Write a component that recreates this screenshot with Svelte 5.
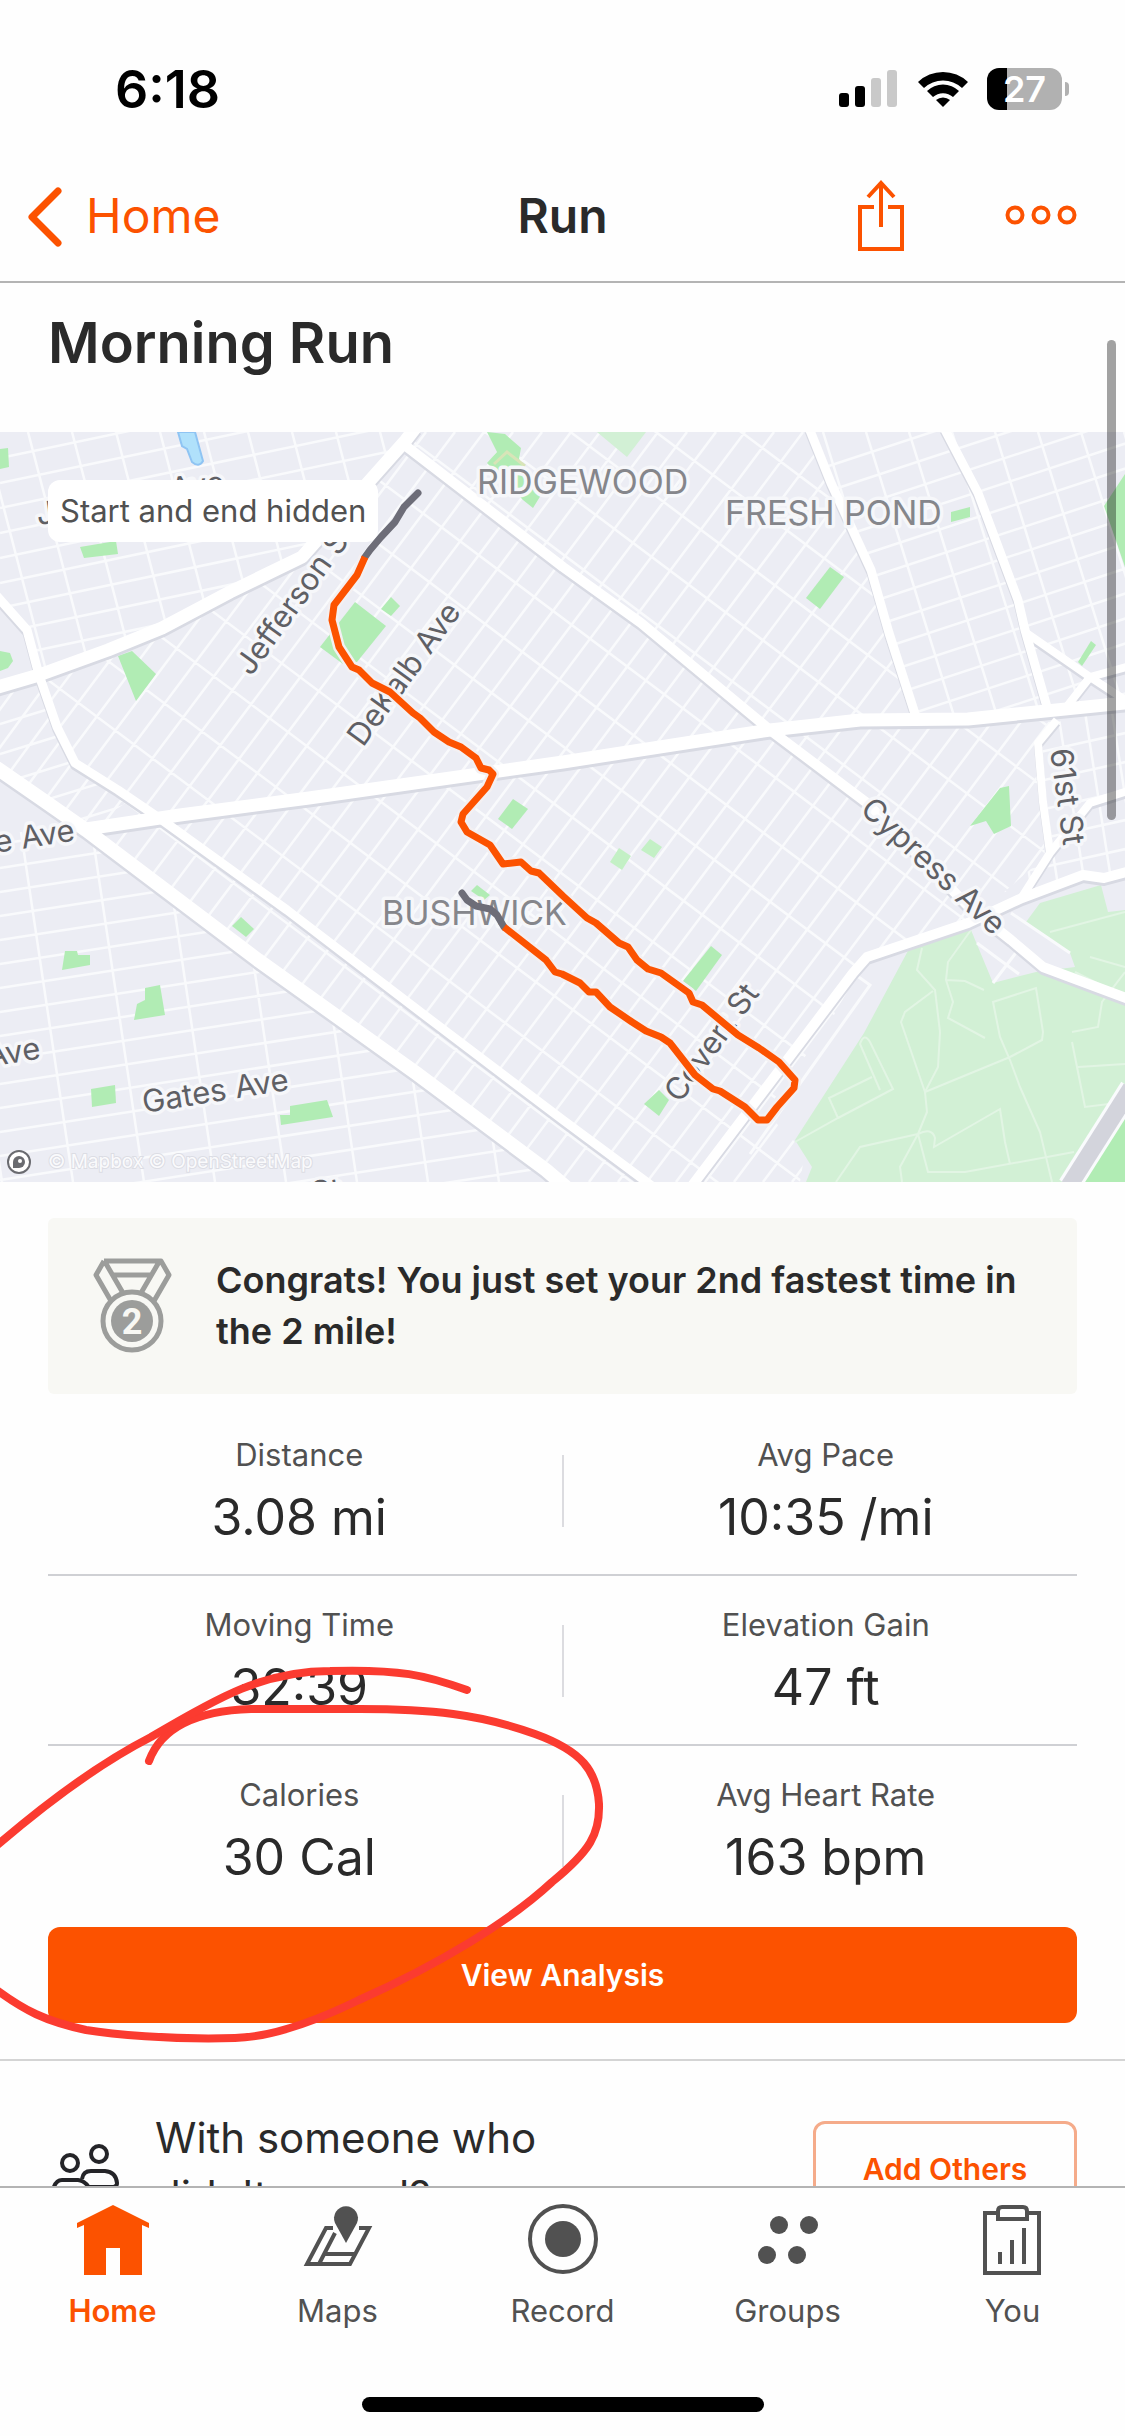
<script>
  const stats = [
    [{ label: 'Distance', value: '3.08 mi' }, { label: 'Avg Pace', value: '10:35 /mi' }],
    [{ label: 'Moving Time', value: '32:39' }, { label: 'Elevation Gain', value: '47 ft' }],
    [{ label: 'Calories', value: '30 Cal' }, { label: 'Avg Heart Rate', value: '163 bpm' }]
  ];

  // One family of parallel streets: x = x0 + i * step, leaning by (dx, dy).
  function streets(count, x0, y0, stepX, stepY, dx, dy) {
    let d = '';
    for (let i = 0; i < count; i++) {
      d += `M${x0 + i * stepX} ${y0 + i * stepY}l${dx} ${dy}`;
    }
    return d;
  }

  const districts = [
    {
      id: 'bushwick',
      area: '413,0 810,0 831,51 871,138 916,285 968,287 1057,290 1038,311 1045,425 968,491 867,525 830,590 765,680 805,720 800,750 563,750 86,396 118,358 75,331 39,243 162,196 302,125',
      d: streets(68, 20, 0, 29, 0, -562, 750) + streets(22, 0, -620, 0, 64, 1125, 844)
    },
    {
      id: 'north-west',
      area: '0,0 413,0 341,81 302,125 162,196 39,243 27,198 0,168',
      d: streets(16, 0, 26, 0, 25, 420, -88) + streets(12, -60, 0, 44, 0, 65, 250)
    },
    {
      id: 'west',
      area: '0,255 39,243 75,331 126,371 86,396 0,338',
      d: streets(7, 0, 262, 0, 30, 130, -40) + streets(8, 20, 250, 22, 8, -110, 150)
    },
    {
      id: 'south-west',
      area: '0,400 86,398 546,750 0,750',
      d: streets(22, 0, 412, 0, 24, 600, -93) + streets(9, -50, 400, 71, 0, 52, 350)
    },
    {
      id: 'north-east',
      area: '810,0 1125,0 1125,270 968,287 916,285 871,138 831,51',
      d: streets(20, 780, 50, 0, 25, 350, -115) + streets(10, 780, 0, 43, 0, 93, 300)
    },
    {
      id: 'east',
      area: '1057,290 1125,275 1125,440 1083,443 1022,466 968,491 1045,425 1038,311',
      d: streets(8, 950, 340, 0, 29, 180, -40) + streets(7, 950, 280, 27, 0, 28, 180)
    }
  ];

  const roads = [
    { w: 13, d: 'M-9 257L39 243L108 218L162 196L230 160L302 125L341 81L406 8L416 -5' },
    { w: 10, d: 'M402 11L563 135L641 191L770 298L867 371L968 474L1011 508L1043 535L1134 569' },
    { w: 13, d: 'M86 397L180 383L309 366L563 330L770 298L860 288L968 287L1134 270' },
    { w: 9, d: 'M-5 162L27 198L39 243L57 295L75 331L118 358L162 388L287 478L431 588L563 688L652 754' },
    { w: 14, d: 'M-6 334L43 368L86 398L258 528L416 641L546 738L566 755' },
    { w: 9, d: 'M809 -4L831 51L871 138L889 201L916 285' },
    { w: 9, d: 'M944 -4L978 61L1018 168L1025 198L1047 275' },
    { w: 8, d: 'M1025 200L1090 245L1134 274' },
    { w: 8, d: 'M1065 277L1090 245L1134 233' },
    { w: 8, d: 'M1057 288L1038 311L1043 370L1050 421' },
    { w: 10, d: 'M1134 438L1104 446L1083 443L1022 466L968 491L867 525L853 541L691 755' },
    { w: 8, d: 'M1022 465L1050 421L1090 371L1134 357' }
  ];

  const parks = [
    '0,17 8,16 9,35 0,37',
    '80,115 116,109 118,122 84,126',
    '0,219 10,221 13,229 8,236 0,239',
    '118,224 132,219 156,242 136,269',
    '355,170 386,194 357,230 343,232 320,215',
    '391,165 400,174 391,184 381,177',
    '487,0 505,2 521,16 519,27 541,63 533,76 523,68 487,31 497,20',
    '830,135 844,145 820,177 806,166',
    '951,80 970,75 970,85 951,90',
    '1104,74 1125,42 1125,135',
    '1091,209 1096,213 1082,234 1078,230',
    '1000,356 1009,354 1011,394 994,402 986,389 970,394',
    '513,367 528,377 512,397 498,387',
    '477,453 490,463 484,468 471,459',
    '241,485 254,497 246,505 232,494',
    '65,519 77,519 78,523 90,523 90,533 62,538',
    '145,556 160,553 165,583 134,588 137,572 145,568',
    '91,657 115,653 116,671 92,675',
    '280,683 290,683 290,674 327,668 333,685 281,693',
    '711,514 722,523 696,559 683,549',
    '659,658 669,668 659,684 644,672'
  ];

  const startHidden = '418,61 404,75 395,90 381,105 370,118 365,125';
  const endHidden = '504,495 497,483 490,477 476,474 467,468 462,461';
  const route =
    '365,125 357,143 334,173 332,188 339,215 352,235 359,238 372,251 390,260 413,281 420,286 434,300 449,310 461,315 476,326 481,336 489,338 493,342 487,355 463,382 461,390 467,400 490,413 503,432 521,430 531,439 539,441 563,464 587,486 596,491 619,511 628,515 637,528 648,537 661,541 689,561 693,570 702,573 738,603 759,616 779,630 795,648 794,656 777,675 767,688 758,688 745,675 720,659 713,657 695,643 670,611 661,605 646,599 632,590 610,575 596,560 589,560 580,551 562,542 555,540 546,528 504,495';

  const streetNames = [
    { text: 'J', x: 38, y: 93, turn: -8 },
    { text: 'Ave', x: 172, y: 68, turn: -8 },
    { text: 'Jefferson St', x: 251, y: 245, turn: -54 },
    { text: 'DeKalb Ave', x: 363, y: 316, turn: -54 },
    { text: 'Cypress Ave', x: 859, y: 379, turn: 43 },
    { text: '61st St', x: 1050, y: 318, turn: 82 },
    { text: 'Covert St', x: 680, y: 672, turn: -54 },
    { text: 'Gates Ave', x: 144, y: 681, turn: -9 },
    { text: 'e Ave', x: -4, y: 421, turn: -9 },
    { text: 'Ave', x: -12, y: 635, turn: -9 },
    { text: 'St', x: 313, y: 772, turn: -9 }
  ];

  const districtNames = [
    { text: 'RIDGEWOOD', x: 477, y: 62 },
    { text: 'FRESH POND', x: 725, y: 93 },
    { text: 'BUSHWICK', x: 382, y: 493 }
  ];
</script>

<div class="screen">
  <header>
    <div class="status">
      <span class="clock">6:18</span>
      <span class="signals">
        <svg width="60" height="40" viewBox="0 0 60 40" aria-hidden="true">
          <rect x="0" y="24" width="10" height="14" rx="3" />
          <rect x="16" y="17" width="10" height="21" rx="3" />
          <rect x="32" y="9" width="10" height="29" rx="3" fill="#c9c9c9" />
          <rect x="48" y="1" width="10" height="37" rx="3" fill="#c9c9c9" />
        </svg>
        <svg width="52" height="40" viewBox="0 0 52 40" aria-hidden="true">
          <path d="M1 13a36 36 0 0 1 50 0l-6 6a28 28 0 0 0-38 0z" />
          <path d="M10 22a23 23 0 0 1 32 0l-6 6a15 15 0 0 0-20 0z" />
          <path d="M19 31a11 11 0 0 1 14 0l-7 7z" />
        </svg>
        <span class="battery"><span class="cell">27</span><span class="nub"></span></span>
      </span>
    </div>
    <nav class="bar" aria-label="Page">
      <a class="back" href="#home">
        <svg width="40" height="64" viewBox="0 0 40 64" aria-hidden="true">
          <path d="M34 7L8 33L34 59" fill="none" stroke="currentColor" stroke-width="7" stroke-linecap="round" stroke-linejoin="round" />
        </svg>
        Home
      </a>
      <h1>Run</h1>
      <div class="actions">
        <button aria-label="Share">
          <svg width="48" height="74" viewBox="0 0 48 74" fill="none" stroke="currentColor" stroke-width="4">
            <path d="M17 28H3V70H45V28H31" />
            <path d="M24 48V4M11 18L24 4L37 18" />
          </svg>
        </button>
        <button aria-label="More">
          <svg width="72" height="22" viewBox="0 0 72 22" fill="none" stroke="currentColor" stroke-width="4">
            <circle cx="10" cy="10" r="7.5" />
            <circle cx="36" cy="10" r="7.5" />
            <circle cx="62" cy="10" r="7.5" />
          </svg>
        </button>
      </div>
    </nav>
  </header>

  <main>
    <h2>Morning Run</h2>

    <div class="map">
      <svg viewBox="0 0 1125 750" role="img" aria-label="Route map">
        <defs>
          {#each districts as district}
            <clipPath id={district.id}><polygon points={district.area} /></clipPath>
          {/each}
        </defs>
        <rect width="1125" height="750" fill="#ecedf4" />
        <g fill="none" stroke="#f9fafc" stroke-width="2.5">
          {#each districts as district}
            <path d={district.d} clip-path="url(#{district.id})" />
          {/each}
        </g>
        <polygon points="622,0 646,0 627,25 597,0" fill="#d2f0d5" />
        {#each parks as park}
          <polygon points={park} fill="#b1ecb4" />
        {/each}
        <path d="M494 32L507 20L525 34" fill="none" stroke="#d8e4b8" stroke-width="3" />
        <polygon points="619,416 631,424 622,438 610,430" fill="#c3f0c5" />
        <polygon points="650,407 662,415 654,426 641,418" fill="#c3f0c5" />
        <path d="M178 0L182 14L187 17L192 30Q199 36 203 29L195 0Z" fill="#b0e1fb" stroke="#8fc4f3" stroke-width="2" />
        <path d="M910 515L971 498L993 551L1036 540L1075 535L1070 521L1026 490L1040 471L1101 453L1108 480L1125 478V750H806L812 735L795 708L864 601Z" fill="#d2f0d5" />
        <path d="M1125 680V750H1078Z" fill="#b1ecb4" />
        <path d="M853 541L870 553L750 722M1011 481L1070 521M977 511L1019 542M993 551L1018 518" fill="none" stroke="#f9fafc" stroke-width="3" />
        <g fill="none" stroke="#e2f5e4" stroke-width="2">
          <path d="M922 516L917 538L935 558L940 600L938 635L925 660L901 590L905 580L933 559" />
          <path d="M971 498L948 530L946 548L953 570L948 586L985 606M946 548L965 549L984 558" />
          <path d="M925 660L1010 625L1042 608L1043 600L1036 556L993 570L1000 605L1010 628L1020 655L1040 700L1052 750" />
          <path d="M795 710L838 686L893 657L870 610Q864 600 860 612L880 658M838 686L829 666L872 645" />
          <path d="M925 660L927 680L918 702L900 735L902 750M918 702L860 715L836 750M918 702L928 740H965L1074 720M918 702Q932 695 935 706L934 715L1000 677L1005 710L1010 732" />
          <path d="M1050 500L1125 480M1075 540L1125 565M1072 610L1085 675L1125 670M1072 600L1098 595L1102 570L1125 540M1078 635L1125 632M1090 525L1125 535" />
        </g>
        <path d="M1069 754L1131 656" stroke="#fafbfd" stroke-width="23" />
        <path d="M1069 754L1131 656" stroke="#d3d4dc" stroke-width="17" />
        <g fill="none" stroke="#d8dae3" stroke-linejoin="round" transform="translate(0 3)">
          {#each roads as road}<path d={road.d} stroke-width={road.w} />{/each}
        </g>
        <g fill="none" stroke="#ffffff" stroke-linejoin="round">
          {#each roads as road}<path d={road.d} stroke-width={road.w} />{/each}
        </g>
        <g class="street-names">
          {#each streetNames as name}
            <text x={name.x} y={name.y} transform="rotate({name.turn} {name.x} {name.y})">{name.text}</text>
          {/each}
        </g>
        <g class="district-names">
          {#each districtNames as name}
            <text x={name.x} y={name.y}>{name.text}</text>
          {/each}
        </g>
        <g fill="none" stroke-linecap="round" stroke-linejoin="round">
          <polyline points={route} stroke="#f3f0f2" stroke-width="12" stroke-linecap="butt" />
          <polyline points={startHidden} stroke="#6d6d78" stroke-width="7" />
          <polyline points={endHidden} stroke="#6d6d78" stroke-width="7" />
          <polyline points={route} stroke="#fc5200" stroke-width="7" stroke-linecap="butt" />
        </g>
        <circle cx="19" cy="730" r="11" fill="#fff" stroke="#6a6b70" stroke-width="2" />
        <path d="M13 736v-6a6 6 0 1 1 6 6z" fill="#6a6b70" />
        <circle cx="20" cy="729" r="2" fill="#fff" />
        <text class="credit" x="48" y="736">© Mapbox © OpenStreetMap</text>
      </svg>
      <span class="pill">Start and end hidden</span>
    </div>

    <section class="congrats">
      <svg width="80" height="98" viewBox="0 0 80 98" aria-hidden="true" fill="none" stroke="#9c9d9b" stroke-width="5">
        <path d="M12 4H69L77 18L62 44M12 4L4 18L19 44M13 5L31 36M67 5L49 36M22 18H58" stroke-linejoin="round" />
        <circle cx="40" cy="64" r="29" fill="#f8f8f4" />
        <circle cx="40" cy="64" r="21" fill="#9c9d9b" stroke="none" />
        <text x="40" y="77" text-anchor="middle" fill="#f8f8f4" stroke="none">2</text>
      </svg>
      <p>Congrats! You just set your 2nd fastest time in the 2 mile!</p>
    </section>

    <section class="summary">
      <div class="stats">
        {#each stats as row}
          <div class="row">
            {#each row as stat}
              <div class="stat">
                <span class="label">{stat.label}</span>
                <span class="value">{stat.value}</span>
              </div>
            {/each}
          </div>
        {/each}
      </div>
      <button class="primary">View Analysis</button>
      <svg class="scribble" viewBox="0 0 1125 654" aria-hidden="true">
        <path d="M149 355C160 325 190 305 251 303H360C430 303 480 308 535 328C582 345 597 365 599 398C600 428 590 445 552 476C510 515 440 558 359 594C310 618 270 631 235 632C170 634 110 628 86 624C45 615 25 605 -6 582" />
        <path d="M-6 442C60 385 110 352 151 331C220 290 265 265 330 265C400 263 425 269 467 284" />
      </svg>
    </section>

    <section class="others">
      <svg width="70" height="64" viewBox="0 0 70 64" aria-hidden="true" fill="none" stroke="#242428" stroke-width="4">
        <circle cx="49" cy="11" r="8" />
        <circle cx="20" cy="20" r="8" />
        <path d="M32 36Q33 28 41 28H55Q66 29 67 40Q67 44 62 44H38" />
        <path d="M2 52Q4 37 12 37H28Q38 38 42 52" />
      </svg>
      <p>With someone who didn't record?</p>
      <button class="outline">Add Others</button>
    </section>
  </main>

  <footer>
    <nav class="tabs" aria-label="Main">
      <a href="#home" class="active">
        <svg viewBox="0 0 80 76" aria-hidden="true" fill="currentColor">
          <path d="M40 3L76 21V26L69 23V73H47V46H33V73H11V23L4 26V21Z" />
        </svg>
        Home
      </a>
      <a href="#maps">
        <svg viewBox="0 0 80 76" aria-hidden="true" fill="none" stroke="currentColor" stroke-width="4">
          <path d="M35 26H28L9 62H52L71 26H61M21 62L37 31M27 52H57" />
          <path d="M48 41L37 21A12 12 0 1 1 59 21Z" fill="currentColor" stroke="none" />
        </svg>
        Maps
      </a>
      <a href="#record">
        <svg viewBox="0 0 80 76" aria-hidden="true" fill="none" stroke="currentColor" stroke-width="4">
          <circle cx="40" cy="37" r="33" />
          <circle cx="40" cy="37" r="18" fill="currentColor" stroke="none" />
        </svg>
        Record
      </a>
      <a href="#groups">
        <svg viewBox="0 0 80 76" aria-hidden="true" fill="currentColor">
          <circle cx="31" cy="23" r="9" /><circle cx="61" cy="23" r="9" />
          <circle cx="19" cy="53" r="9" /><circle cx="49" cy="53" r="9" />
        </svg>
        Groups
      </a>
      <a href="#you">
        <svg viewBox="0 0 80 76" aria-hidden="true" fill="none" stroke="currentColor" stroke-width="4">
          <path d="M24 11H12V71H66V11H54M27 50V62M39 38V62M51 26V62" />
          <path d="M25 17V9Q25 5 29 5H50Q54 5 54 9V17Z" />
        </svg>
        You
      </a>
    </nav>
    <div class="indicator"></div>
  </footer>
  <div class="scrollbar"></div>
</div>

<style>
  :global(body) {
    background: #fefefe;
  }
  .screen {
    position: relative;
    display: flex;
    flex-direction: column;
    height: 100vh;
    overflow: hidden;
    font-family: Inter, 'Liberation Sans', sans-serif;
    color: #2a2a2a;
    background: #fefefe;
  }
  h1, h2, p {
    margin: 0;
  }
  button {
    font: inherit;
    color: inherit;
    background: none;
    border: 0;
    padding: 0;
  }
  a {
    color: inherit;
    text-decoration: none;
  }
  svg {
    display: block;
    flex: none;
  }
  header {
    flex: none;
    border-bottom: 2px solid #b4b4b4;
  }
  .status {
    display: flex;
    align-items: center;
    justify-content: space-between;
    height: 60px;
    padding: 59px 56px 31px 115px;
    color: #000;
  }
  .clock {
    font-size: 52px;
    font-weight: 600;
  }
  .signals {
    display: flex;
    align-items: center;
    gap: 18px;
  }
  .battery {
    display: flex;
    align-items: center;
    gap: 3px;
  }
  .cell {
    width: 75px;
    border-radius: 12px;
    background: linear-gradient(90deg, #000 27%, #b1b1b1 27%);
    color: #fff;
    font-size: 36px;
    font-weight: 600;
    line-height: 42px;
    text-align: center;
  }
  .nub {
    width: 4px;
    height: 14px;
    border-radius: 0 4px 4px 0;
    background: #b1b1b1;
  }
  .bar {
    display: grid;
    grid-template-columns: 1fr auto 1fr;
    align-items: center;
    height: 131px;
    color: #fc5200;
  }
  .back {
    display: flex;
    align-items: center;
    gap: 22px;
    padding-left: 24px;
    font-size: 48px;
  }
  h1 {
    font-size: 48px;
    font-weight: 600;
    color: #2a2a2a;
  }
  .actions {
    display: flex;
    align-items: center;
    justify-content: flex-end;
    gap: 100px;
    padding-right: 48px;
  }
  main {
    flex: 1;
    min-height: 0;
    overflow: hidden;
  }
  h2 {
    padding: 30px 48px 59px;
    font-size: 56px;
    font-weight: 600;
    line-height: 60px;
  }
  .map {
    position: relative;
  }
  .map svg {
    width: 100%;
    height: auto;
  }
  .street-names text,
  .district-names text {
    paint-order: stroke;
    stroke: #f6f7fa;
    stroke-width: 7px;
    stroke-linejoin: round;
  }
  .street-names {
    fill: #5f6065;
    font-size: 31px;
  }
  .district-names {
    fill: #85868b;
    font-size: 34px;
  }
  .credit {
    fill: #fafafc;
    font-size: 19px;
    paint-order: stroke;
    stroke: #dcdde4;
    stroke-width: 2px;
  }
  .pill {
    position: absolute;
    left: 48px;
    top: 48px;
    padding: 0 12px;
    border-radius: 12px;
    background: #fff;
    color: #515151;
    font-size: 31px;
    line-height: 62px;
  }
  .congrats {
    display: flex;
    align-items: center;
    gap: 44px;
    margin: 36px 48px 12px;
    padding: 37px 44px;
    border-radius: 6px;
    background: #f8f8f4;
  }
  .congrats text {
    font-family: Roboto, sans-serif;
    font-size: 36px;
    font-weight: 700;
  }
  .congrats p {
    font-size: 36px;
    font-weight: 600;
    line-height: 51px;
  }
  .summary {
    position: relative;
    padding: 0 48px 36px;
    border-bottom: 2px solid #d4d4d4;
  }
  .row {
    display: grid;
    grid-template-columns: 1fr 1fr;
    gap: 24px;
    position: relative;
    padding: 29px 0 27px;
    border-bottom: 2px solid #cfd0d4;
  }
  .row:last-child {
    border-color: transparent;
  }
  .row::before {
    content: '';
    position: absolute;
    left: calc(50% - 1px);
    top: 49px;
    width: 2px;
    height: 72px;
    background: #dcdce0;
  }
  .stat {
    display: flex;
    flex-direction: column;
    align-items: center;
    gap: 12px;
  }
  .label {
    color: #515151;
    font-size: 31px;
    line-height: 40px;
  }
  .value {
    font-size: 50px;
    line-height: 60px;
  }
  .primary {
    display: block;
    width: 100%;
    height: 96px;
    margin-top: 11px;
    border-radius: 12px;
    background: #fc5200;
    color: #fff;
    font-size: 30px;
    font-weight: 600;
  }
  .scribble {
    position: absolute;
    left: 0;
    top: 0;
    width: 100%;
    fill: none;
    stroke: #fb3b30;
    stroke-width: 8px;
    stroke-linecap: round;
    pointer-events: none;
  }
  .others {
    display: flex;
    align-items: flex-start;
    padding: 48px 48px 0 50px;
  }
  .others svg {
    margin-top: 34px;
  }
  .others p {
    flex: 1;
    max-width: 440px;
    margin: 0 auto 0 35px;
    font-size: 42px;
    line-height: 58px;
  }
  .outline {
    width: 264px;
    height: 96px;
    margin-top: 12px;
    box-sizing: border-box;
    border: 3px solid #f5ab8a;
    border-radius: 12px;
    color: #fc5200;
    font-size: 30px;
    font-weight: 600;
  }
  footer {
    flex: none;
    border-top: 2px solid #b4b4b4;
    background: #fefefe;
  }
  .tabs {
    display: grid;
    grid-template-columns: repeat(5, 1fr);
    padding-top: 14px;
    color: #515151;
    font-size: 31px;
    line-height: 40px;
  }
  .tabs a {
    display: flex;
    flex-direction: column;
    align-items: center;
    gap: 13px;
  }
  .tabs svg {
    width: 80px;
    height: 76px;
  }
  .tabs .active {
    color: #fc5200;
    font-weight: 600;
  }
  .indicator {
    width: 402px;
    height: 15px;
    margin: 66px auto 24px;
    border-radius: 8px;
    background: #000;
  }
  .scrollbar {
    position: absolute;
    right: 9px;
    top: 340px;
    width: 9px;
    height: 480px;
    border-radius: 5px;
    background: rgba(0, 0, 0, 0.36);
  }
</style>
